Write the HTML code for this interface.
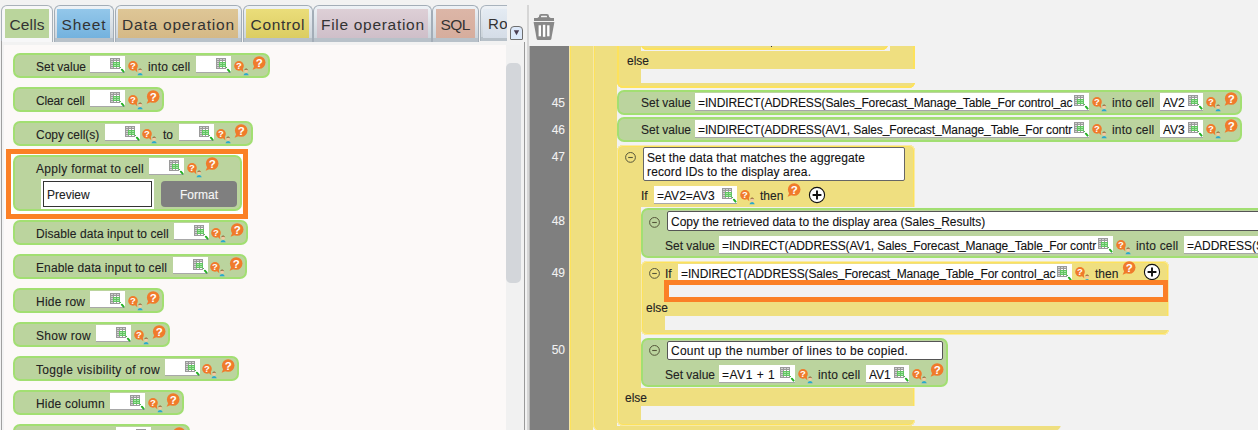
<!DOCTYPE html><html><head><meta charset="utf-8"><style>
html,body{margin:0;padding:0;}
body{width:1258px;height:430px;overflow:hidden;position:relative;background:#f2f2f2;font-family:"Liberation Sans", sans-serif;}
.tx{position:absolute;white-space:nowrap;-webkit-text-stroke:0.1px currentColor;}
.gb{position:absolute;box-sizing:border-box;background:#bbd49e;border:2px solid #a2df72;border-radius:7px;}
.inp{position:absolute;box-sizing:border-box;background:#fff;border-bottom:1px solid #a8a8a8;overflow:hidden;}

</style></head><body>

<svg width="0" height="0" style="position:absolute">
<defs>
<symbol id="cell" viewBox="0 0 15 15">
  <rect x="0" y="0" width="10" height="11" fill="#9a9a9a"/>
  <g fill="#d2d2d2">
   <rect x="1" y="1" width="2" height="1"/><rect x="4" y="1" width="2" height="1"/><rect x="7" y="1" width="2" height="1"/>
   <rect x="1" y="3" width="2" height="1"/><rect x="1" y="5" width="2" height="1"/><rect x="1" y="7" width="2" height="1"/><rect x="1" y="9" width="2" height="1"/>
  </g>
  <g fill="#ffffff">
   <rect x="4" y="3" width="2" height="1"/><rect x="7" y="3" width="2" height="1"/>
   <rect x="4" y="9" width="2" height="1"/><rect x="7" y="9" width="2" height="1"/>
  </g>
  <rect x="3" y="4" width="7" height="5" fill="#62c462"/>
  <g fill="#a6e8a6">
   <rect x="4" y="5" width="2" height="1"/><rect x="7" y="5" width="2" height="1"/>
   <rect x="4" y="7" width="2" height="1"/><rect x="7" y="7" width="2" height="1"/>
  </g>
  <path d="M11.9 11.7 L13.6 13.6" stroke="#26b026" stroke-width="2" stroke-linecap="round"/>
  <rect x="10" y="9" width="1" height="1" fill="#50c050"/>
</symbol>
<symbol id="sh" viewBox="0 0 16 15">
  <circle cx="5" cy="4.9" r="4.8" fill="#f07b2b"/>
  <path d="M6.3 8.6 L9.3 11.3 L8.8 7.2 Z" fill="#f07b2b"/>
  <text x="5" y="8.4" font-family="Liberation Sans" font-weight="bold" font-size="9.5" fill="#fff" text-anchor="middle">?</text>
  <circle cx="12.1" cy="9.8" r="1.9" fill="#f3c9a0"/>
  <path d="M9.9 9.6 Q12.1 5.4 14.3 9.6 Q12.1 7.6 9.9 9.6 Z" fill="#7a4a1e"/>
  <path d="M9.5 14.2 Q9.7 12 12.1 11.9 Q14.5 12 14.7 14.2Z" fill="#2aa8cc"/>
</symbol>
<symbol id="bh" viewBox="0 0 14 14">
  <circle cx="7.2" cy="6.5" r="6.3" fill="#f07b2b"/>
  <path d="M2.5 9.5 L0.6 13.7 L5.5 11.8 Z" fill="#f07b2b"/>
  <text x="7.2" y="10.7" font-family="Liberation Sans" font-weight="bold" font-size="11.5" fill="#fff" text-anchor="middle">?</text>
</symbol>
<symbol id="minus" viewBox="0 0 12 12">
  <circle cx="6.5" cy="6.4" r="4.9" fill="none" stroke="#55553a" stroke-width="1"/>
  <path d="M4.2 6.5 H8.8" stroke="#55553a" stroke-width="1.1"/>
</symbol>
<symbol id="plus" viewBox="0 0 18 18">
  <circle cx="9" cy="9" r="7.6" fill="#fff" stroke="#111" stroke-width="1.1"/>
  <path d="M4.6 9 H13.4 M9 4.6 V13.4" stroke="#111" stroke-width="1.9"/>
</symbol>
<symbol id="trash" viewBox="0 0 22 28">
  <path d="M6 6 V3.2 Q6 1 8.2 1 H13.8 Q16 1 16 3.2 V6 H14 V3.4 Q14 2.8 13.4 2.8 H8.6 Q8 2.8 8 3.4 V6 Z" fill="#888"/>
  <path d="M1 5 H21 V8 H1 Z" fill="#888"/>
  <path d="M4.8 4.2 H17.2 V5.2 H4.8Z" fill="#888"/>
  <path d="M0.6 9 H21.4 L18.3 26 Q18 27 17 27 H5 Q4 27 3.7 26 Z" fill="#888"/>
  <rect x="5.6" y="12.3" width="2.4" height="11" fill="#fff"/>
  <rect x="9.9" y="11.8" width="2.4" height="12" fill="#fff"/>
  <rect x="14.1" y="12.3" width="2.4" height="11" fill="#fff"/>
</symbol>
</defs>
</svg>

<div style="position:absolute;left:1px;top:5px;width:52px;height:37px;box-sizing:border-box;border:1px solid #a9b1b9;border-bottom:none;border-radius:6px 6px 0 0;background:#f7f7f8;"></div>
<div style="position:absolute;left:5px;top:9px;width:44px;height:29px;background:linear-gradient(#bad59c,#bad59c);"></div>
<div class="tx" style="left:5px;width:44px;text-align:center;top:15.5px;font-size:15.5px;line-height:17px;color:#333;-webkit-text-stroke:0;letter-spacing:0.17px;text-indent:0.17px">Cells</div>
<div style="position:absolute;left:54px;top:5px;width:60px;height:37px;box-sizing:border-box;border:1px solid #a3adb7;border-bottom:none;border-radius:6px 6px 0 0;background:linear-gradient(#eef2f6,#ccd4db 89%,#b8c1c9 89%,#b8c1c9);"></div>
<div style="position:absolute;left:57px;top:9px;width:53px;height:29px;background:linear-gradient(#93c7ea,#74b2de);"></div>
<div class="tx" style="left:57px;width:53px;text-align:center;top:15.5px;font-size:15.5px;line-height:17px;color:#333;-webkit-text-stroke:0;letter-spacing:0.9px;text-indent:0.9px">Sheet</div>
<div style="position:absolute;left:115px;top:5px;width:127px;height:37px;box-sizing:border-box;border:1px solid #a3adb7;border-bottom:none;border-radius:6px 6px 0 0;background:linear-gradient(#eef2f6,#ccd4db 89%,#b8c1c9 89%,#b8c1c9);"></div>
<div style="position:absolute;left:118px;top:9px;width:120px;height:29px;background:linear-gradient(#dec696,#d5b987);"></div>
<div class="tx" style="left:118px;width:120px;text-align:center;top:15.5px;font-size:15.5px;line-height:17px;color:#333;-webkit-text-stroke:0;letter-spacing:0.8px;text-indent:0.8px">Data operation</div>
<div style="position:absolute;left:243px;top:5px;width:70px;height:37px;box-sizing:border-box;border:1px solid #a3adb7;border-bottom:none;border-radius:6px 6px 0 0;background:linear-gradient(#eef2f6,#ccd4db 89%,#b8c1c9 89%,#b8c1c9);"></div>
<div style="position:absolute;left:246px;top:9px;width:63px;height:29px;background:linear-gradient(#eadd7a,#dccd62);"></div>
<div class="tx" style="left:246px;width:63px;text-align:center;top:15.5px;font-size:15.5px;line-height:17px;color:#333;-webkit-text-stroke:0;letter-spacing:0.65px;text-indent:0.65px">Control</div>
<div style="position:absolute;left:313px;top:5px;width:119px;height:37px;box-sizing:border-box;border:1px solid #a3adb7;border-bottom:none;border-radius:6px 6px 0 0;background:linear-gradient(#eef2f6,#ccd4db 89%,#b8c1c9 89%,#b8c1c9);"></div>
<div style="position:absolute;left:317px;top:9px;width:111px;height:29px;background:linear-gradient(#ddcfd6,#cfbfc9);"></div>
<div class="tx" style="left:317px;width:111px;text-align:center;top:15.5px;font-size:15.5px;line-height:17px;color:#333;-webkit-text-stroke:0;letter-spacing:0.7px;text-indent:0.7px">File operation</div>
<div style="position:absolute;left:432px;top:5px;width:47px;height:37px;box-sizing:border-box;border:1px solid #a3adb7;border-bottom:none;border-radius:6px 6px 0 0;background:linear-gradient(#eef2f6,#ccd4db 89%,#b8c1c9 89%,#b8c1c9);"></div>
<div style="position:absolute;left:436px;top:9px;width:39px;height:29px;background:linear-gradient(#dcb6a7,#d6ad9d);"></div>
<div class="tx" style="left:436px;width:39px;text-align:center;top:15.5px;font-size:15.5px;line-height:17px;color:#333;-webkit-text-stroke:0;letter-spacing:-0.6px;text-indent:-0.6px">SQL</div>
<div style="position:absolute;left:480px;top:5px;width:27px;height:36px;overflow:hidden"><div style="position:absolute;left:0;top:0;width:60px;height:36px;box-sizing:border-box;border:1px solid #a9b3bd;border-bottom:none;border-radius:6px 6px 0 0;background:linear-gradient(#eef2f6,#ccd4db 89%,#b8c1c9 89%,#b8c1c9);"></div><div style="position:absolute;left:3px;top:4px;width:40px;height:29px;background:linear-gradient(#e4ebf3,#d5dde7);"></div><div class="tx" style="left:8px;top:10px;font-size:15px;line-height:17px;color:#333;letter-spacing:0.5px;-webkit-text-stroke:0">Ro</div></div>
<div style="position:absolute;left:510px;top:26px;width:13px;height:14px;box-sizing:border-box;border:1px solid #6e6e6e;border-radius:4px 4px 1px 1px;background:#dde9fa;"></div>
<svg style="position:absolute;left:513px;top:30px" width="7" height="6"><path d="M0.8 0.3 H6.2 L3.5 5.2Z" fill="#4a3d52"/></svg>
<div style="position:absolute;left:1px;top:41px;width:1px;height:389px;background:#a0a0a0;"></div>
<div style="position:absolute;left:2px;top:45px;width:504px;height:385px;background:#fcf9f8;"></div>
<div style="position:absolute;left:2px;top:45px;width:2px;height:385px;background:#f3f3f3;"></div>
<div style="position:absolute;left:506px;top:45px;width:15px;height:385px;background:#f1f1f1;"></div>
<div style="position:absolute;left:506px;top:63px;width:15px;height:220px;background:#d3d6da;border-radius:5px;"></div>
<div style="position:absolute;left:524px;top:42px;width:1px;height:388px;background:#9a9a9a;"></div>
<div style="position:absolute;left:527px;top:5px;width:2px;height:425px;background:#d6d6d6;"></div>
<div class="gb" style="left:13px;top:53px;width:257px;height:25px"></div>
<div class="tx" style="left:36px;top:60px;font-size:12px;line-height:14px;color:#222;">Set value</div>
<div class="inp" style="left:90px;top:56px;width:35px;height:17px"></div>
<svg style="position:absolute;left:110px;top:58px" width="15" height="15"><use href="#cell"/></svg>
<svg style="position:absolute;left:128px;top:61px" width="16" height="15"><use href="#sh"/></svg>
<div class="tx" style="left:148px;top:60px;font-size:12px;line-height:14px;color:#222;letter-spacing:0.19px;">into cell</div>
<div class="inp" style="left:196px;top:56px;width:35px;height:17px"></div>
<svg style="position:absolute;left:216px;top:58px" width="15" height="15"><use href="#cell"/></svg>
<svg style="position:absolute;left:234px;top:61px" width="16" height="15"><use href="#sh"/></svg>
<svg style="position:absolute;left:252px;top:56px" width="14" height="14"><use href="#bh"/></svg>
<div class="gb" style="left:13px;top:87px;width:151px;height:25px"></div>
<div class="tx" style="left:36px;top:94px;font-size:12px;line-height:14px;color:#222;letter-spacing:-0.15px;">Clear cell</div>
<div class="inp" style="left:90px;top:90px;width:35px;height:17px"></div>
<svg style="position:absolute;left:110px;top:92px" width="15" height="15"><use href="#cell"/></svg>
<svg style="position:absolute;left:128px;top:95px" width="16" height="15"><use href="#sh"/></svg>
<svg style="position:absolute;left:146px;top:90px" width="14" height="14"><use href="#bh"/></svg>
<div class="gb" style="left:13px;top:121px;width:240px;height:25px"></div>
<div class="tx" style="left:36px;top:128px;font-size:12px;line-height:14px;color:#222;">Copy cell(s)</div>
<div class="inp" style="left:105px;top:124px;width:35px;height:17px"></div>
<svg style="position:absolute;left:125px;top:126px" width="15" height="15"><use href="#cell"/></svg>
<svg style="position:absolute;left:142px;top:129px" width="16" height="15"><use href="#sh"/></svg>
<div class="tx" style="left:163px;top:128px;font-size:12px;line-height:14px;color:#222;">to</div>
<div class="inp" style="left:179px;top:124px;width:35px;height:17px"></div>
<svg style="position:absolute;left:199px;top:126px" width="15" height="15"><use href="#cell"/></svg>
<svg style="position:absolute;left:216px;top:129px" width="16" height="15"><use href="#sh"/></svg>
<svg style="position:absolute;left:234px;top:124px" width="14" height="14"><use href="#bh"/></svg>
<div style="position:absolute;left:6px;top:149px;width:242px;height:70px;box-sizing:border-box;border:5px solid #fb8026;background:#fff;"></div>
<div class="gb" style="left:13px;top:155px;width:229px;height:56px"></div>
<div class="tx" style="left:36px;top:162px;font-size:12px;line-height:14px;color:#222;letter-spacing:0.3px;">Apply format to cell</div>
<div class="inp" style="left:149px;top:158px;width:35px;height:17px"></div>
<svg style="position:absolute;left:169px;top:160px" width="15" height="15"><use href="#cell"/></svg>
<svg style="position:absolute;left:187px;top:163px" width="16" height="15"><use href="#sh"/></svg>
<svg style="position:absolute;left:205px;top:157px" width="14" height="14"><use href="#bh"/></svg>
<div style="position:absolute;left:41px;top:179px;width:113px;height:30px;background:#fff;"></div>
<div style="position:absolute;left:43px;top:181px;width:109px;height:26px;box-sizing:border-box;border:1.5px solid #333;background:#fff;"></div>
<div class="tx" style="left:47px;top:188px;font-size:12px;line-height:14px;color:#222;">Preview</div>
<div style="position:absolute;left:161px;top:181px;width:76px;height:26px;background:#7f7f7f;border-radius:4px;"></div>
<div class="tx" style="left:161px;width:76px;text-align:center;top:188px;font-size:12px;line-height:14px;color:#f6f6f6;">Format</div>
<div class="gb" style="left:13px;top:220px;width:235px;height:25px"></div>
<div class="tx" style="left:36px;top:227px;font-size:12px;line-height:14px;color:#222;letter-spacing:0.08px;">Disable data input to cell</div>
<div class="inp" style="left:174px;top:223px;width:35px;height:17px"></div>
<svg style="position:absolute;left:194px;top:225px" width="15" height="15"><use href="#cell"/></svg>
<svg style="position:absolute;left:211px;top:228px" width="16" height="15"><use href="#sh"/></svg>
<svg style="position:absolute;left:230px;top:223px" width="14" height="14"><use href="#bh"/></svg>
<div class="gb" style="left:13px;top:254px;width:234px;height:25px"></div>
<div class="tx" style="left:36px;top:261px;font-size:12px;line-height:14px;color:#222;letter-spacing:0.12px;">Enable data input to cell</div>
<div class="inp" style="left:173px;top:257px;width:35px;height:17px"></div>
<svg style="position:absolute;left:193px;top:259px" width="15" height="15"><use href="#cell"/></svg>
<svg style="position:absolute;left:210px;top:262px" width="16" height="15"><use href="#sh"/></svg>
<svg style="position:absolute;left:229px;top:257px" width="14" height="14"><use href="#bh"/></svg>
<div class="gb" style="left:13px;top:288px;width:151px;height:25px"></div>
<div class="tx" style="left:36px;top:295px;font-size:12px;line-height:14px;color:#222;letter-spacing:0.23px;">Hide row</div>
<div class="inp" style="left:90px;top:291px;width:35px;height:17px"></div>
<svg style="position:absolute;left:110px;top:293px" width="15" height="15"><use href="#cell"/></svg>
<svg style="position:absolute;left:128px;top:296px" width="16" height="15"><use href="#sh"/></svg>
<svg style="position:absolute;left:146px;top:291px" width="14" height="14"><use href="#bh"/></svg>
<div class="gb" style="left:13px;top:322px;width:157px;height:25px"></div>
<div class="tx" style="left:36px;top:329px;font-size:12px;line-height:14px;color:#222;letter-spacing:0.29px;">Show row</div>
<div class="inp" style="left:96px;top:325px;width:35px;height:17px"></div>
<svg style="position:absolute;left:116px;top:327px" width="15" height="15"><use href="#cell"/></svg>
<svg style="position:absolute;left:134px;top:330px" width="16" height="15"><use href="#sh"/></svg>
<svg style="position:absolute;left:152px;top:325px" width="14" height="14"><use href="#bh"/></svg>
<div class="gb" style="left:13px;top:356px;width:226px;height:25px"></div>
<div class="tx" style="left:36px;top:363px;font-size:12px;line-height:14px;color:#222;letter-spacing:0.33px;">Toggle visibility of row</div>
<div class="inp" style="left:165px;top:359px;width:35px;height:17px"></div>
<svg style="position:absolute;left:185px;top:361px" width="15" height="15"><use href="#cell"/></svg>
<svg style="position:absolute;left:202px;top:364px" width="16" height="15"><use href="#sh"/></svg>
<svg style="position:absolute;left:221px;top:359px" width="14" height="14"><use href="#bh"/></svg>
<div class="gb" style="left:13px;top:390px;width:171px;height:25px"></div>
<div class="tx" style="left:36px;top:397px;font-size:12px;line-height:14px;color:#222;letter-spacing:0.2px;">Hide column</div>
<div class="inp" style="left:110px;top:393px;width:35px;height:17px"></div>
<svg style="position:absolute;left:130px;top:395px" width="15" height="15"><use href="#cell"/></svg>
<svg style="position:absolute;left:148px;top:398px" width="16" height="15"><use href="#sh"/></svg>
<svg style="position:absolute;left:166px;top:393px" width="14" height="14"><use href="#bh"/></svg>
<div class="gb" style="left:13px;top:424px;width:177px;height:25px"></div>
<div class="tx" style="left:36px;top:431px;font-size:12px;line-height:14px;color:#222;letter-spacing:0.2px;">Hide column</div>
<div class="inp" style="left:116px;top:427px;width:35px;height:17px"></div>
<svg style="position:absolute;left:136px;top:429px" width="15" height="15"><use href="#cell"/></svg>
<svg style="position:absolute;left:154px;top:432px" width="16" height="15"><use href="#sh"/></svg>
<svg style="position:absolute;left:172px;top:427px" width="14" height="14"><use href="#bh"/></svg>
<svg style="position:absolute;left:533px;top:13px" width="22" height="28"><use href="#trash"/></svg>
<div style="position:absolute;left:529px;top:46px;width:729px;height:384px;overflow:hidden"><div style="position:absolute;left:-529px;top:-46px;width:1258px;height:430px">
<div style="position:absolute;left:529px;top:46px;width:1px;height:384px;background:#b8b8b8;"></div>
<div style="position:absolute;left:530px;top:46px;width:39px;height:384px;background:#7f7f7f;"></div>
<div class="tx" style="left:530px;width:35px;text-align:right;top:96px;font-size:12px;line-height:14px;color:#f2f2f2;">45</div>
<div class="tx" style="left:530px;width:35px;text-align:right;top:123px;font-size:12px;line-height:14px;color:#f2f2f2;">46</div>
<div class="tx" style="left:530px;width:35px;text-align:right;top:150px;font-size:12px;line-height:14px;color:#f2f2f2;">47</div>
<div class="tx" style="left:530px;width:35px;text-align:right;top:214px;font-size:12px;line-height:14px;color:#f2f2f2;">48</div>
<div class="tx" style="left:530px;width:35px;text-align:right;top:266px;font-size:12px;line-height:14px;color:#f2f2f2;">49</div>
<div class="tx" style="left:530px;width:35px;text-align:right;top:343px;font-size:12px;line-height:14px;color:#f2f2f2;">50</div>
<div style="position:absolute;left:569px;top:46px;width:24px;height:384px;background:#efdf80;box-shadow:inset 1px 0 #f6e8a6, inset 2px 0 #fde25c;"></div>
<div style="position:absolute;left:593px;top:30px;width:468px;height:401px;background:#efdf80;border-radius:0 0 7px 7px;box-shadow:inset 1px 0 #f6e8a6, inset 2px 0 #fde25c;"></div>
<div style="position:absolute;left:617px;top:46px;width:641px;height:380px;background:#f2f2f2;"></div>
<div style="position:absolute;left:617px;top:30px;width:298px;height:58px;background:#efdf80;border-radius:0 0 6px 6px;box-shadow:inset 2px 0 #fde25c, inset -2px 0 #fde25c, inset 0 -2px #fde25c;"></div>
<div style="position:absolute;left:641px;top:46px;width:249px;height:5px;background:#f2f2f2;"></div>
<div style="position:absolute;left:641px;top:30px;width:247px;height:20px;background:#efdf80;border-radius:0 0 6px 6px;box-shadow:inset 2px 0 #fde25c, inset -2px 0 #fde25c, inset 0 -2px #fde25c;"></div>
<div class="tx" style="left:627px;top:54px;font-size:12px;line-height:14px;color:#222;">else</div>
<div style="position:absolute;left:771px;top:46px;width:1px;height:1px;background:#333;"></div>
<div style="position:absolute;left:641px;top:69px;width:274px;height:14px;background:#f2f2f2;"></div>
<div class="gb" style="left:617px;top:90px;width:625px;height:25px"></div>
<div class="tx" style="left:641px;top:96px;font-size:12px;line-height:14px;color:#222;">Set value</div>
<div class="inp" style="left:695px;top:93px;width:394px;height:18px"><div style="position:absolute;left:3px;top:0;width:376px;height:20px;overflow:hidden"><div class="tx" style="left:0;top:3px;font-size:12px;line-height:14px;color:#111;letter-spacing:-0.125px">=INDIRECT(ADDRESS(Sales<span style="position:relative;top:-1.5px">_</span>Forecast<span style="position:relative;top:-1.5px">_</span>Manage<span style="position:relative;top:-1.5px">_</span>Table<span style="position:relative;top:-1.5px">_</span>For control<span style="position:relative;top:-1.5px">_</span>ac</div></div></div>
<svg style="position:absolute;left:1074px;top:95px" width="15" height="15"><use href="#cell"/></svg>
<svg style="position:absolute;left:1092px;top:97px" width="16" height="15"><use href="#sh"/></svg>
<div class="tx" style="left:1112px;top:96px;font-size:12px;line-height:14px;color:#222;letter-spacing:0.19px;">into cell</div>
<div class="inp" style="left:1160px;top:93px;width:43px;height:18px"><div style="position:absolute;left:3px;top:0;width:27px;height:20px;overflow:hidden"><div class="tx" style="left:0;top:3px;font-size:12px;line-height:14px;color:#111;">AV2</div></div></div>
<svg style="position:absolute;left:1188px;top:95px" width="15" height="15"><use href="#cell"/></svg>
<svg style="position:absolute;left:1206px;top:97px" width="16" height="15"><use href="#sh"/></svg>
<svg style="position:absolute;left:1224px;top:92px" width="14" height="14"><use href="#bh"/></svg>
<div class="gb" style="left:617px;top:117px;width:625px;height:25px"></div>
<div class="tx" style="left:641px;top:123px;font-size:12px;line-height:14px;color:#222;">Set value</div>
<div class="inp" style="left:695px;top:120px;width:394px;height:18px"><div style="position:absolute;left:3px;top:0;width:376px;height:20px;overflow:hidden"><div class="tx" style="left:0;top:3px;font-size:12px;line-height:14px;color:#111;letter-spacing:-0.125px">=INDIRECT(ADDRESS(AV1, Sales<span style="position:relative;top:-1.5px">_</span>Forecast<span style="position:relative;top:-1.5px">_</span>Manage<span style="position:relative;top:-1.5px">_</span>Table<span style="position:relative;top:-1.5px">_</span>For contr</div></div></div>
<svg style="position:absolute;left:1074px;top:122px" width="15" height="15"><use href="#cell"/></svg>
<svg style="position:absolute;left:1092px;top:124px" width="16" height="15"><use href="#sh"/></svg>
<div class="tx" style="left:1112px;top:123px;font-size:12px;line-height:14px;color:#222;letter-spacing:0.19px;">into cell</div>
<div class="inp" style="left:1160px;top:120px;width:43px;height:18px"><div style="position:absolute;left:3px;top:0;width:27px;height:20px;overflow:hidden"><div class="tx" style="left:0;top:3px;font-size:12px;line-height:14px;color:#111;">AV3</div></div></div>
<svg style="position:absolute;left:1188px;top:122px" width="15" height="15"><use href="#cell"/></svg>
<svg style="position:absolute;left:1206px;top:124px" width="16" height="15"><use href="#sh"/></svg>
<svg style="position:absolute;left:1224px;top:119px" width="14" height="14"><use href="#bh"/></svg>
<div style="position:absolute;left:617px;top:145px;width:298px;height:281px;background:#efdf80;border-radius:6px;box-shadow:inset 1px 0 #f7eaa8, inset -1px 0 #f7eaa8, inset 0 1px #f7eaa8, inset 0 -1px #f7eaa8, inset 2px 0 #fde25c, inset -2px 0 #fde25c, inset 0 2px #fde25c, inset 0 -2px #fde25c;"></div>
<div style="position:absolute;left:641px;top:207px;width:617px;height:181px;background:#f2f2f2;"></div>
<div style="position:absolute;left:641px;top:406px;width:274px;height:14px;background:#f2f2f2;"></div>
<svg style="position:absolute;left:624px;top:151px" width="12" height="12"><use href="#minus"/></svg>
<div style="position:absolute;left:643px;top:147px;width:262px;height:34px;box-sizing:border-box;border:1px solid #666;border-radius:2px;background:#fff;"></div>
<div class="tx" style="left:647px;top:151px;font-size:12px;line-height:14px;color:#111;letter-spacing:0.1px;">Set the data that matches the aggregate</div>
<div class="tx" style="left:647px;top:165px;font-size:12px;line-height:14px;color:#111;letter-spacing:0.13px;">record IDs to the display area.</div>
<div class="tx" style="left:641px;top:189px;font-size:12px;line-height:14px;color:#222;">If</div>
<div class="inp" style="left:654px;top:186px;width:83px;height:18px"><div style="position:absolute;left:3px;top:0;width:67px;height:20px;overflow:hidden"><div class="tx" style="left:0;top:3px;font-size:12px;line-height:14px;color:#111;">=AV2=AV3</div></div></div>
<svg style="position:absolute;left:722px;top:188px" width="15" height="15"><use href="#cell"/></svg>
<svg style="position:absolute;left:740px;top:190px" width="16" height="15"><use href="#sh"/></svg>
<div class="tx" style="left:760px;top:189px;font-size:12px;line-height:14px;color:#222;">then</div>
<svg style="position:absolute;left:787px;top:183px" width="14" height="14"><use href="#bh"/></svg>
<svg style="position:absolute;left:808px;top:186px" width="18" height="18"><use href="#plus"/></svg>
<div class="tx" style="left:625px;top:391px;font-size:12px;line-height:14px;color:#222;">else</div>
<div class="gb" style="left:641px;top:208px;width:629px;height:50px"></div>
<svg style="position:absolute;left:648px;top:216px" width="12" height="12"><use href="#minus"/></svg>
<div style="position:absolute;left:667px;top:211px;width:603px;height:20px;box-sizing:border-box;border:1px solid #555;border-radius:2px;background:#fff;"></div>
<div class="tx" style="left:671px;top:215px;font-size:12px;line-height:14px;color:#111;">Copy the retrieved data to the display area (Sales_Results)</div>
<div class="tx" style="left:665px;top:239px;font-size:12px;line-height:14px;color:#222;">Set value</div>
<div class="inp" style="left:719px;top:236px;width:394px;height:18px"><div style="position:absolute;left:3px;top:0;width:376px;height:20px;overflow:hidden"><div class="tx" style="left:0;top:3px;font-size:12px;line-height:14px;color:#111;letter-spacing:-0.125px">=INDIRECT(ADDRESS(AV1, Sales<span style="position:relative;top:-1.5px">_</span>Forecast<span style="position:relative;top:-1.5px">_</span>Manage<span style="position:relative;top:-1.5px">_</span>Table<span style="position:relative;top:-1.5px">_</span>For contr</div></div></div>
<svg style="position:absolute;left:1098px;top:238px" width="15" height="15"><use href="#cell"/></svg>
<svg style="position:absolute;left:1116px;top:240px" width="16" height="15"><use href="#sh"/></svg>
<div class="tx" style="left:1136px;top:239px;font-size:12px;line-height:14px;color:#222;letter-spacing:0.19px;">into cell</div>
<div class="inp" style="left:1184px;top:236px;width:116px;height:18px"><div style="position:absolute;left:3px;top:0;width:100px;height:20px;overflow:hidden"><div class="tx" style="left:0;top:3px;font-size:12px;line-height:14px;color:#111;">=ADDRESS(Sales<span style="position:relative;top:-1.5px">_</span>Results</div></div></div>
<div style="position:absolute;left:641px;top:261px;width:528px;height:74px;background:#efdf80;border-radius:6px;box-shadow:inset 1px 0 #f7eaa8, inset -1px 0 #f7eaa8, inset 0 1px #f7eaa8, inset 0 -1px #f7eaa8, inset 2px 0 #fde25c, inset -2px 0 #fde25c, inset 0 2px #fde25c, inset 0 -2px #fde25c;"></div>
<svg style="position:absolute;left:648px;top:267px" width="12" height="12"><use href="#minus"/></svg>
<div class="tx" style="left:665px;top:267px;font-size:12px;line-height:14px;color:#222;">If</div>
<div class="inp" style="left:678px;top:264px;width:394px;height:18px"><div style="position:absolute;left:3px;top:0;width:376px;height:20px;overflow:hidden"><div class="tx" style="left:0;top:3px;font-size:12px;line-height:14px;color:#111;letter-spacing:-0.125px">=INDIRECT(ADDRESS(Sales<span style="position:relative;top:-1.5px">_</span>Forecast<span style="position:relative;top:-1.5px">_</span>Manage<span style="position:relative;top:-1.5px">_</span>Table<span style="position:relative;top:-1.5px">_</span>For control<span style="position:relative;top:-1.5px">_</span>ac</div></div></div>
<svg style="position:absolute;left:1057px;top:266px" width="15" height="15"><use href="#cell"/></svg>
<svg style="position:absolute;left:1075px;top:267px" width="16" height="15"><use href="#sh"/></svg>
<div class="tx" style="left:1095px;top:267px;font-size:12px;line-height:14px;color:#222;">then</div>
<svg style="position:absolute;left:1122px;top:261px" width="14" height="14"><use href="#bh"/></svg>
<svg style="position:absolute;left:1143px;top:263px" width="18" height="18"><use href="#plus"/></svg>
<div style="position:absolute;left:664px;top:280px;width:504px;height:22px;box-sizing:border-box;border:5px solid #fb8026;background:#f2f2f2;"></div>
<div class="tx" style="left:646px;top:301px;font-size:12px;line-height:14px;color:#222;">else</div>
<div style="position:absolute;left:665px;top:316px;width:593px;height:14px;background:#f2f2f2;"></div>
<div class="gb" style="left:641px;top:338px;width:307px;height:49px"></div>
<svg style="position:absolute;left:648px;top:344px" width="12" height="12"><use href="#minus"/></svg>
<div style="position:absolute;left:667px;top:341px;width:276px;height:19px;box-sizing:border-box;border:1px solid #555;border-radius:2px;background:#fff;"></div>
<div class="tx" style="left:671px;top:344px;font-size:12px;line-height:14px;color:#111;letter-spacing:0.26px;">Count up the number of lines to be copied.</div>
<div class="tx" style="left:665px;top:368px;font-size:12px;line-height:14px;color:#222;">Set value</div>
<div class="inp" style="left:719px;top:365px;width:76px;height:18px"><div style="position:absolute;left:3px;top:0;width:60px;height:20px;overflow:hidden"><div class="tx" style="left:0;top:3px;font-size:12px;line-height:14px;color:#111;letter-spacing:0.5px">=AV1 + 1</div></div></div>
<svg style="position:absolute;left:780px;top:367px" width="15" height="15"><use href="#cell"/></svg>
<svg style="position:absolute;left:798px;top:369px" width="16" height="15"><use href="#sh"/></svg>
<div class="tx" style="left:818px;top:368px;font-size:12px;line-height:14px;color:#222;letter-spacing:0.19px;">into cell</div>
<div class="inp" style="left:866px;top:365px;width:43px;height:18px"><div style="position:absolute;left:3px;top:0;width:27px;height:20px;overflow:hidden"><div class="tx" style="left:0;top:3px;font-size:12px;line-height:14px;color:#111;">AV1</div></div></div>
<svg style="position:absolute;left:894px;top:367px" width="15" height="15"><use href="#cell"/></svg>
<svg style="position:absolute;left:912px;top:369px" width="16" height="15"><use href="#sh"/></svg>
<svg style="position:absolute;left:930px;top:363px" width="14" height="14"><use href="#bh"/></svg>
</div></div>
</body></html>
